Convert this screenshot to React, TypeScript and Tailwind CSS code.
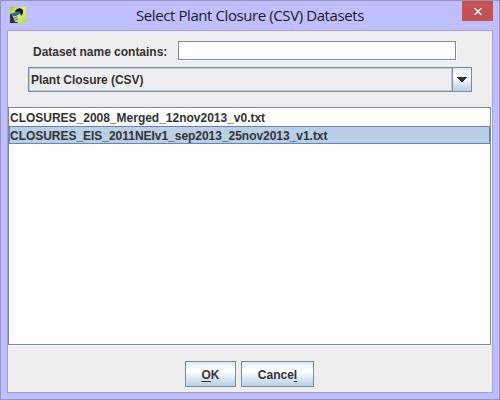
import React from "react";

function AppIcon() {
  return (
    <svg width="16" height="16" viewBox="0 0 16 16" className="ml-[9px] mt-[6px] block shrink-0">
      <defs>
        <linearGradient id="lime" x1="0" y1="0" x2="1" y2="1">
          <stop offset="0" stopColor="#a9c62c" />
          <stop offset="0.45" stopColor="#e6f37a" />
          <stop offset="1" stopColor="#b4dd2c" />
        </linearGradient>
      </defs>
      <rect width="16" height="16" fill="url(#lime)" />
      <path d="M0 7L4 6L7 9L8 15L7 16H0Z" fill="#2a3226" />
      <path d="M2 8L5 9L8 9L8 15H5L4 12Z" fill="#bcc4c4" />
      <path d="M4 11L7 10M5 13L8 12" stroke="#66706e" strokeWidth="0.8" />
      <path d="M5 4L7 2L10 1L13 3L13 6L11 9L10 6L8 5L6 7Z" fill="#11161c" />
      <path d="M1 7L6 5L9 4L11 6L8 8L4 9Z" fill="#3c62b0" />
    </svg>
  );
}

function TitleBar() {
  return (
    <header className="flex h-[29px] shrink-0">
      <AppIcon />
      <h1 className="ml-[110px] w-[230px] whitespace-nowrap font-['Open_Sans','Noto_Sans',sans-serif] text-[15px] font-normal leading-[29px] tracking-[-0.41px] text-[#1a1a26]">
        Select Plant Closure (CSV) Datasets
      </h1>
      <button className="ml-auto mr-[6px] flex h-[20px] w-[31px] items-center justify-center bg-[#c75050] pt-[1px]">
        <svg width="8" height="7" viewBox="0 0 8 7" shapeRendering="crispEdges">
          <path d="M0 0h2v1h1v1h2V1h1V0h2v1H7v1H6v1H5v1h1v1h1v1h1v1H6V6H5V5H3v1H2v1H0V6h1V5h1V4h1V3H2V2H1V1H0z" fill="#fff" />
        </svg>
      </button>
    </header>
  );
}

const metal =
  "border border-[#7a8a99] bg-[linear-gradient(180deg,#dde8f3_0%,#ffffff_30%,#ffffff_40%,#b8cfe5_100%)]";

export default function App() {
  return (
    <div className="flex h-[400px] w-[500px] flex-col border border-[#9393be] bg-[#bfbfff] font-['Liberation_Sans',Arial,sans-serif] text-[12px] font-bold text-[#333333]">
      <TitleBar />
      <main className="mx-[6px] flex h-[363px] flex-col border border-[#a1a1d6] bg-[#eeeeee]">
        <div className="mt-[10px] flex h-[19px]">
          <label className="ml-[25px] w-[145px] whitespace-nowrap leading-[22px] tracking-[-0.02px]">
            Dataset name contains:
          </label>
          <div className="w-[278px] border border-[#7a8a99] bg-white shadow-[1px_1px_0_#ffffff]" />
        </div>
        <div className="ml-[20px] mt-[7px] flex h-[25px] w-[444px] border border-[#7a8a99]">
          <div className="w-[423px] border border-[#b8cfe5] pl-[1px] leading-[22px] tracking-[-0.05px]">Plant Closure (CSV)</div>
          <div className="flex flex-1 items-center justify-center border-l border-[#7a8a99] bg-[linear-gradient(180deg,#dde8f3_0%,#ffffff_30%,#ffffff_40%,#b8cfe5_100%)]">
            <svg width="10" height="5" viewBox="0 0 10 5" shapeRendering="crispEdges">
              <path d="M0 0h10v1H9v1H8v1H7v1H6v1H4V4H3V3H2V2H1V1H0z" fill="#333" />
            </svg>
          </div>
        </div>
        <div className="mt-[15px] h-[238px] w-[483px] border border-[#7a8a99] bg-white shadow-[1px_1px_0_#ffffff]">
          <div className="h-[18px] whitespace-nowrap pl-[1px] leading-[20px] tracking-[-0.01px]">
            CLOSURES_2008_Merged_12nov2013_v0.txt
          </div>
          <div className="h-[18px] whitespace-nowrap border border-[#6382bf] bg-[#b8cfe5] leading-[18px] tracking-[-0.03px]">
            CLOSURES_EIS_2011NEIv1_sep2013_25nov2013_v1.txt
          </div>
        </div>
        <footer className="ml-[177px] mt-[16px] flex h-[26px] gap-[5px]">
          <button className={metal + " w-[51px] pt-[2px] leading-[22px]"}>
            <span className="underline underline-offset-2">O</span>K
          </button>
          <button className={metal + " w-[73px] pt-[2px] leading-[22px]"}>
            Cance<span className="underline underline-offset-2">l</span>
          </button>
        </footer>
      </main>
    </div>
  );
}
